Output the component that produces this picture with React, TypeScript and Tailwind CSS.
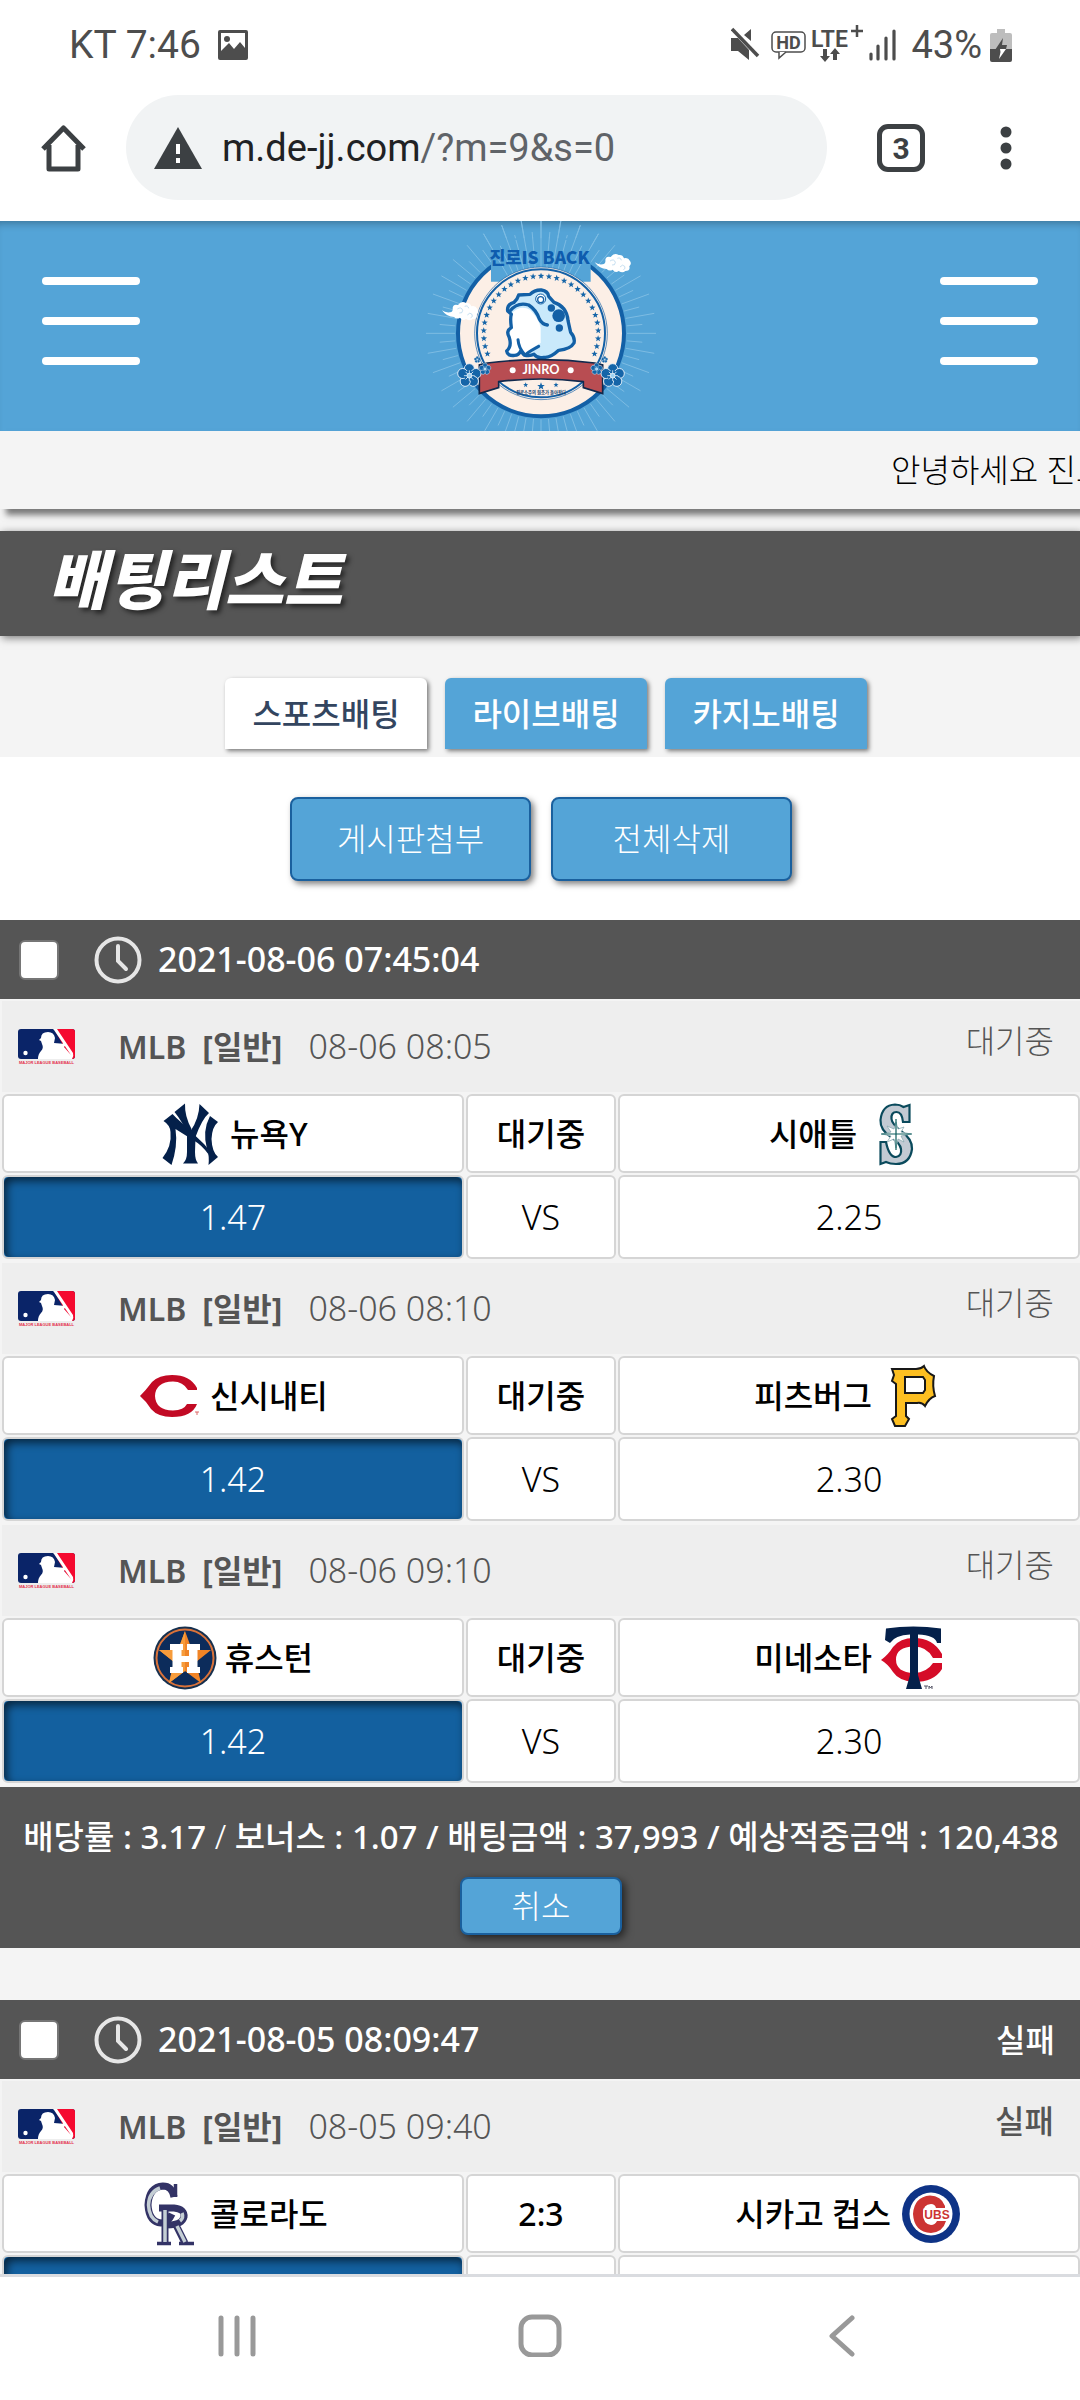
import type { ReactNode } from 'react';

interface Team {
  name: string;
  logo: ReactNode;
}

interface Match {
  id: number;
  time: string;
  status: string;
  statusBold?: boolean;
  score: string;
  home: Team;
  away: Team;
  homeOdds: string;
  awayOdds: string;
}

interface Slip {
  id: number;
  createdAt: string;
  result?: string;
  matches: Match[];
}

/* ---------- team logos, all on a 64x64 canvas ---------- */

function LogoBox({ children }: { children: ReactNode }) {
  return (
    <svg viewBox="0 0 64 64" className="size-16 shrink-0" aria-hidden="true">
      {children}
    </svg>
  );
}

const yankees = (
  <LogoBox>
    <g fill="#04204a">
      <path d="M5.5 19 L14.5 12 Q18 16 24 21 L46 42 Q51 47 51 53 Q44 43 35 38 L17.5 27 Q20 44 13.5 63 L4.5 56 Q14 44 12.5 30 Q12 23 5.5 19Z" />
      <path d="M16.5 10 L27 1.5 Q26.5 14 33.5 27 L31.5 35 Q24 19 16.5 10Z" />
      <path d="M41.5 2 L51 11 Q44 17 37.5 35 L37 50 Q37 58 40 61.5 L25 61.5 Q29 58 29 50 L29 32 L32.5 29 Q41 17 41.5 2Z" />
      <path d="M52 14 L60 20 Q54 25 53.5 37 Q54 50 60 55 L50.5 63 Q51.5 54 49 47 Q44 29 52 14Z" />
    </g>
  </LogoBox>
);

const mariners = (
  <LogoBox>
    <path
      d="M44.5 3 V20 H38 Q37 10 31.5 10 Q26 10 26.5 17 Q27 22 36 29 Q47.5 37 47 47 Q45 62 31 62 Q25 62 21 60 L15.5 62 V40 H21 Q24 55 31 55 Q37 54 36 47 Q35 41 26 35 Q15 28 15.5 18 Q17 3 30 2.5 Q35 2.5 38.5 5 Z"
      fill="#c2cad3"
      stroke="#0a4a5c"
      strokeWidth="2.2"
    />
    <path d="M31 20 L33 27 L39 25 L36 30 L46 32 L36 34 L39 40 L33 37 L31 46 L29 37 L22 40 L26 34 L17 32 L26 30 L22 24 L29 27Z" fill="#fff" stroke="#7fa3aa" strokeWidth="0.7" />
    <path d="M31 17 V48 M16 32 H47" stroke="#0b5c5c" strokeWidth="1.2" />
  </LogoBox>
);

const reds = (
  <LogoBox>
    <path d="M2 32 Q8 26 14 18 Q21 11 34 11 Q52 11 59 24 V26 H50 Q45 17.5 35 17.5 Q17.5 18 17 32 Q17.5 46 35 46.5 Q46 46 49 40 H59 Q54 53 34 53 Q20 53 13 45 Q8 37 2 32Z" fill="#c20a24" />
    <path d="M57 48 H61 M59 48 V51" stroke="#d66" strokeWidth="1" />
  </LogoBox>
);

const pirates = (
  <LogoBox>
    <path
      d="M12 5 H36 Q41 5 44 2 Q46 8 54 12 Q52 22 55 32 Q49 34 45 42 Q42 38 37 39 H26 V52 L29 55 L25 62 H15 L12 55 L16 52 V20 L12 17 L14 11 Z M25 13 V29 H43 L45 26 V16 L43 13 Z"
      fill="#fdbf21"
      fillRule="evenodd"
      stroke="#181818"
      strokeWidth="2"
    />
  </LogoBox>
);

const astros = (
  <LogoBox>
    <circle cx="32" cy="32" r="31.5" fill="#15304f" />
    <circle cx="32" cy="32" r="28.5" fill="#0c2c5b" stroke="#d9723a" strokeWidth="2" />
    <path d="M32 5 L39 24 H58 L43 36 L48 57 L32 45 L16 57 L21 36 L6 24 H25Z" fill="#f08426" />
    <path d="M32 5 L32 45 L16 57 L21 36 L6 24 H25Z" fill="#f79c3b" />
    <path d="M17 18 H30 V24 H28.5 V30 H36 V24 H34 V18 H47 V24 H44.5 V41 H47 V47 H34 V41 H36 V36 H28.5 V41 H30 V47 H17 V41 H19.5 V24 H17Z" fill="#fff" />
  </LogoBox>
);

const twins = (
  <LogoBox>
    <path d="M1 34 Q8 29 13 21 Q20 12 34 12 Q53 12 62 28 V32 H53 Q47 20.5 34 20.5 Q16 21 16 33.5 Q16 46.5 34 47 Q47 46.5 53 37 H62 V43 Q54 56 34 56 Q19 55 13 46 Q8 38 1 34Z" fill="#d50c28" />
    <path d="M6 2.5 Q33 -1.5 61 2.5 V17 H57 Q55 9 38 8.5 V49 L42 63 H26 L30 49 V8.5 Q15 9 10 17 L5 14Z" fill="#04204a" />
    <path d="M44 60 H48 M46 60 V63 M49 63 V60 L50.5 62 L52 60 V63" stroke="#556" strokeWidth="1" fill="none" />
  </LogoBox>
);

const rockies = (
  <LogoBox>
    <g fill="none" strokeLinejoin="round">
      <g stroke="#333366" strokeWidth="7">
        <path d="M36 15 Q34 4 25 4 Q11 5 10 23 Q11 40 23 41 Q30 41 34 32" />
        <path d="M27 26 V61 M21 26 H36 Q47 27 46 35 Q44 43 29 43 M38 43 L47 61" />
      </g>
      <path d="M19 61.5 H33 M41 61.5 H56 M37.5 2 V15" stroke="#333366" strokeWidth="3.5" />
      <g stroke="#c4ced4" strokeWidth="3.5">
        <path d="M22 6 Q11 10 10.5 23 Q11 36 20 40" />
        <path d="M27 28 V60 M39 44 L47 60 M44 31 Q46 36 42 39" />
      </g>
    </g>
  </LogoBox>
);

const cubs = (
  <LogoBox>
    <circle cx="32" cy="32" r="29" fill="#0e3386" />
    <circle cx="32" cy="32" r="21.5" fill="#fff" />
    <path d="M46 24 Q42 13.5 31 13.5 Q15 15 14 32 Q15 50 32 51 Q44 50 47 39 H38 Q36 43 32 43 Q24 42 24 32 Q24 22 32 22 Q36 22 37 26 H46Z" fill="#cc3433" />
    <text x="38" y="37" textAnchor="middle" fontSize="12" fontWeight="900" fill="#cc3433" stroke="#fff" strokeWidth="3" paintOrder="stroke" className="font-['Liberation_Sans',sans-serif]">
      UBS
    </text>
  </LogoBox>
);

function MlbLogo() {
  return (
    <svg viewBox="0 0 58 38" className="h-[38px] w-[58px] shrink-0" role="img" aria-label="MLB">
      <rect y="1" width="57" height="30" rx="3" fill="#0a2468" />
      <path d="M36 1 H54 Q57 1 57 4 V28 Q57 31 54 31 H53 Z" fill="#f5092f" />
      <path
        d="M35 1 H39 L55 25 Q56 28 54 31 H20 Q20 26 23 23 Q26 20 24 16 L23 13 L21 12 L23 10 Q23 4 30 4 Q36 4 37 10 L36 15 L48 16 L46 19 L53 27 L36 2Z"
        fill="#fff"
      />
      <circle cx="7.5" cy="25" r="2.2" fill="#fff" />
      <text x="28.5" y="36" textAnchor="middle" fontSize="4" fontWeight="700" fill="#e4314f" className="font-['Liberation_Sans',sans-serif]">
        MAJOR LEAGUE BASEBALL
      </text>
    </svg>
  );
}

/* ---------- data ---------- */

const SLIPS: Slip[] = [
  {
    id: 1,
    createdAt: '2021-08-06 07:45:04',
    matches: [
      {
        id: 11,
        time: '08-06 08:05',
        status: '대기중',
        score: '대기중',
        home: { name: '뉴욕Y', logo: yankees },
        away: { name: '시애틀', logo: mariners },
        homeOdds: '1.47',
        awayOdds: '2.25',
      },
      {
        id: 12,
        time: '08-06 08:10',
        status: '대기중',
        score: '대기중',
        home: { name: '신시내티', logo: reds },
        away: { name: '피츠버그', logo: pirates },
        homeOdds: '1.42',
        awayOdds: '2.30',
      },
      {
        id: 13,
        time: '08-06 09:10',
        status: '대기중',
        score: '대기중',
        home: { name: '휴스턴', logo: astros },
        away: { name: '미네소타', logo: twins },
        homeOdds: '1.42',
        awayOdds: '2.30',
      },
    ],
  },
  {
    id: 2,
    createdAt: '2021-08-05 08:09:47',
    result: '실패',
    matches: [
      {
        id: 21,
        time: '08-05 09:40',
        status: '실패',
        statusBold: true,
        score: '2:3',
        home: { name: '콜로라도', logo: rockies },
        away: { name: '시카고 컵스', logo: cubs },
        homeOdds: '',
        awayOdds: '',
      },
    ],
  },
];

const TABS = ['스포츠배팅', '라이브배팅', '카지노배팅'];

/* ---------- phone chrome ---------- */

function StatusBar() {
  return (
    <div className="flex h-[90px] shrink-0 items-center justify-between pr-[68px] pl-[69px] font-['Roboto',sans-serif] text-[38px] text-[#4d4d4d]">
      <div className="flex items-center gap-4">
        <span className="text-[39px]">KT 7:46</span>
        <svg viewBox="0 0 32 32" className="size-8" aria-hidden="true">
          <path
            d="M3 1 H29 Q31 1 31 3 V29 Q31 31 29 31 H3 Q1 31 1 29 V3 Q1 1 3 1Z M4 4 V22 L12 14 L17 20 L23 13 L28 19 V4Z"
            fill="#4d4d4d"
            fillRule="evenodd"
          />
          <circle cx="10" cy="10" r="3" fill="#4d4d4d" />
        </svg>
      </div>
      <div className="flex items-center">
        <svg viewBox="0 0 180 44" className="h-11 w-[180px]" fill="#4d4d4d" aria-hidden="true">
          <path d="M0 15 H7 L18 27 V37 L7 28 H0Z M20 6 V18 L13 12Z" />
          <path d="M1 6 L27 33" stroke="#4d4d4d" strokeWidth="3.5" />
          <rect x="41" y="9" width="33" height="20" rx="4" fill="none" stroke="#4d4d4d" strokeWidth="1.5" />
          <path d="M48 29 V35 L55 29" fill="#fff" stroke="#4d4d4d" strokeWidth="1.5" />
          <text x="57.5" y="25.5" textAnchor="middle" fontSize="18" fontWeight="700">HD</text>
          <text x="80" y="24" fontSize="23" fontWeight="600">LTE</text>
          <path d="M126 2 V14 M120 8 H132" stroke="#4d4d4d" strokeWidth="2.5" />
          <path d="M92 26 H96 V33 H99 L94 39 L89 33 H92Z M102 37 H106 V31 H109 L104 25 L99 31 H102Z" />
          <path d="M140 31 V36 M147 23 V36 M155 15 V36 M163 8 V36" stroke="#4d4d4d" strokeWidth="3.2" strokeLinecap="round" />
        </svg>
        <span>43%</span>
        <svg viewBox="0 0 22 34" className="ml-2 h-[34px] w-[22px]" aria-hidden="true">
          <path d="M7 1 H15 V5 H20 Q22 5 22 7 V21 H0 V7 Q0 5 2 5 H7Z" fill="#bdbdbd" />
          <path d="M0 21 H22 V32 Q22 34 20 34 H2 Q0 34 0 32Z" fill="#4d4d4d" />
          <path d="M13 10 L5 22 H12 L13 21 H16 L17 17 H12Z" fill="#4d4d4d" />
          <path d="M10 21 H16 L9 31 L10.5 24Z" fill="#fff" />
        </svg>
      </div>
    </div>
  );
}

function BrowserBar() {
  return (
    <div className="flex h-[131px] shrink-0 items-start pr-[60px] pl-10 font-['Roboto',sans-serif]">
      <button type="button" aria-label="Home" className="mt-[34px]">
        <svg viewBox="0 0 48 48" className="size-12" fill="none" stroke="#3c4043" strokeWidth="5" strokeLinejoin="round" aria-hidden="true">
          <path d="M9 21 V45 H38 V21 M3 25 L23.5 4 L44 25" />
        </svg>
      </button>
      <label className="mt-[5px] ml-[38px] flex h-[105px] min-w-0 flex-1 items-center rounded-full bg-[#f1f3f4] pl-7">
        <svg viewBox="0 0 48 42" className="h-[42px] w-12 shrink-0" aria-hidden="true">
          <path d="M24 0 L48 42 H0Z" fill="#3c4043" />
          <path d="M24 17 V27 M24 31 V36" stroke="#fff" strokeWidth="4" />
        </svg>
        <span className="relative ml-5 flex min-w-0 flex-1 pt-[2px] text-[38px]">
          <span className="text-[#202124]">m.de-jj.com</span>
          <span className="text-[#5f6368]">/?m=9&amp;s=0</span>
          <input aria-label="Address" className="absolute inset-0 bg-transparent outline-none" />
        </span>
      </label>
      <button
        type="button"
        aria-label="Tabs"
        className="mt-[34px] ml-[50px] flex size-12 items-center justify-center rounded-[11px] border-[5px] border-[#3c4043] text-[30px] font-bold text-[#3c4043]"
      >
        3
      </button>
      <button type="button" aria-label="Menu" className="mt-[34px] ml-[67px] flex h-12 w-7 items-center justify-center">
        <svg viewBox="0 0 12 48" className="h-12 w-3" fill="#3c4043" aria-hidden="true">
          <circle cx="6" cy="8" r="5.5" />
          <circle cx="6" cy="24" r="5.5" />
          <circle cx="6" cy="40" r="5.5" />
        </svg>
      </button>
    </div>
  );
}

function NavBar() {
  return (
    <nav className="flex h-[126px] shrink-0 items-center justify-between border-t-[3px] border-[#dadce0] bg-white px-[216px] pb-2">
      <button type="button" aria-label="Recent apps">
        <svg viewBox="0 0 44 44" className="size-11" stroke="#999" strokeWidth="5" strokeLinecap="round" aria-hidden="true">
          <path d="M5 5 V41 M21 5 V41 M37 5 V41" />
        </svg>
      </button>
      <button type="button" aria-label="Home screen">
        <svg viewBox="0 0 44 44" className="size-11" fill="none" stroke="#999" strokeWidth="5" aria-hidden="true">
          <rect x="3" y="4" width="38" height="38" rx="11" />
        </svg>
      </button>
      <button type="button" aria-label="Back">
        <svg viewBox="0 0 44 44" className="size-11" fill="none" stroke="#999" strokeWidth="5" strokeLinecap="round" strokeLinejoin="round" aria-hidden="true">
          <path d="M32 5 L12 23 L32 41" />
        </svg>
      </button>
    </nav>
  );
}

/* ---------- site header ---------- */

function Hamburger({ label }: { label: string }) {
  return (
    <button type="button" aria-label={label} className="flex w-[98px] flex-col gap-8 pb-[10px]">
      <span className="h-2 rounded-full bg-white" />
      <span className="h-2 rounded-full bg-white" />
      <span className="h-2 rounded-full bg-white" />
    </button>
  );
}

const CX = 423;
const CY = 355;

function polar(radius: number, deg: number) {
  const a = (deg * Math.PI) / 180;
  return [CX + radius * Math.cos(a), CY + radius * Math.sin(a)];
}

function Star({ x, y, r }: { x: number; y: number; r: number }) {
  const pts = Array.from({ length: 10 }, (_, i) => {
    const a = ((i * 36 - 90) * Math.PI) / 180;
    const rr = i % 2 ? r * 0.42 : r;
    return `${x + rr * Math.cos(a)},${y + rr * Math.sin(a)}`;
  });
  return <polygon points={pts.join(' ')} fill="#1565a8" />;
}

function Flower({ x, y, r }: { x: number; y: number; r: number }) {
  return (
    <g transform={`translate(${x} ${y})`}>
      {[0, 72, 144, 216, 288].map((deg) => (
        <circle key={deg} cy={-r * 0.58} r={r * 0.42} fill="#1565a8" stroke="#e8f2fa" strokeWidth={r * 0.07} transform={`rotate(${deg})`} />
      ))}
      <circle r={r * 0.42} fill="#1565a8" />
      {[0, 45, 90, 135].map((deg) => (
        <path key={deg} d={`M0 ${-r * 0.45} V${r * 0.45}`} stroke="#fff" strokeWidth={r * 0.06} transform={`rotate(${deg})`} />
      ))}
      <circle r={r * 0.2} fill="#9fd2f2" stroke="#fff" strokeWidth={r * 0.06} />
    </g>
  );
}

function Cloud({ x, y }: { x: number; y: number }) {
  return (
    <g transform={`translate(${x} ${y})`}>
      <path d="M0 24 Q10 32 24 30 Q34 28 32 16 Q34 4 48 8 Q58 -6 72 2 Q84 0 88 12 Q100 8 106 20 Q112 28 104 36 Q108 50 92 50 Q84 58 72 50 Q62 58 54 46 Q44 52 36 44 Q14 44 0 24Z" fill="#fff" />
      <path d="M46 20 Q58 12 62 24 Q62 34 52 32 M76 38 Q84 28 90 36 Q94 44 86 46 M68 12 Q78 8 80 18" fill="none" stroke="#a9cfe8" strokeWidth="2" />
    </g>
  );
}

const TOAD =
  'M323 288 Q320 268 342 262 Q352 254 356 240 L390 238 Q404 224 424 225 Q444 228 446 244 L462 262 Q500 274 504 316 Q510 344 512 352 Q526 368 522 384 Q512 402 476 406 Q450 430 432 427 Q412 432 402 418 Q390 424 372 420 L362 408 Q356 421 344 421 Q322 424 320 408 Q336 394 328 368 Q316 348 334 338 Q330 308 334 298 Z';

function JinroLogo() {
  const rays = Array.from({ length: 72 }, (_, i) => i * 5);
  const stars = Array.from({ length: 29 }, (_, i) => -201 + i * 7.93);
  return (
    <svg viewBox="0 18 840 630" className="h-[210px] w-[280px]" role="img" aria-label="진로 IS BACK">
      {rays.map((deg) => {
        const [x1, y1] = polar(258, deg);
        const [x2, y2] = polar(deg % 10 ? 305 : 345, deg);
        return <line key={deg} x1={x1} y1={y1} x2={x2} y2={y2} stroke="#7dbce3" strokeWidth="3" />;
      })}
      <circle cx={CX} cy={CY} r="249" fill="#fcefe6" stroke="#1360a6" strokeWidth="12" />
      <path d="M273 70 H572 V200 H273Z" fill="#54a4d7" />
      {rays.filter((deg) => deg > 235 && deg < 305).map((deg) => {
        const [x1, y1] = polar(190, deg);
        const [x2, y2] = polar(deg % 10 ? 290 : 345, deg);
        return <line key={deg} x1={x1} y1={y1} x2={x2} y2={y2} stroke="#7dbce3" strokeWidth="3" />;
      })}
      <circle cx={CX} cy={CY} r="199" fill="#fcefe6" stroke="#1360a6" strokeWidth="2" />
      <circle cx={CX} cy={CY} r="192" fill="none" stroke="#1360a6" strokeWidth="6" />
      {stars.map((deg) => {
        const [x, y] = polar(172, deg);
        return <Star key={deg} x={x} y={y} r={10} />;
      })}
      <text x="419" y="146" textAnchor="middle" fontSize="52" fontWeight="900" fill="#0e5cae" className="font-['Noto_Sans_CJK_KR',sans-serif]">
        진로IS BACK
      </text>

      {/* toad */}
      <path d={TOAD} fill="#c9e9fb" />
      <path d="M334 296 Q360 268 390 284 Q418 312 422 338 V384 Q398 396 392 416 H374 L362 410 L340 418 L324 410 Q340 394 332 364 Q326 348 338 340Z" fill="#fff" />
      <path d={TOAD} fill="none" stroke="#1360a6" strokeWidth="10" strokeLinejoin="round" />
      <path d="M330 288 Q352 260 386 270 Q408 284 418 312 Q426 328 442 330" fill="none" stroke="#1360a6" strokeWidth="10" strokeLinecap="round" />
      <path d="M354 374 Q356 398 372 416 M380 416 Q390 408 416 394" fill="none" stroke="#1360a6" strokeWidth="9" strokeLinecap="round" />
      <circle cx="422" cy="252" r="15" fill="#fff" stroke="#1360a6" strokeWidth="3" />
      <circle cx="422" cy="254" r="9" fill="none" stroke="#1360a6" strokeWidth="4" />
      <circle cx="476" cy="302" r="19" fill="#1360a6" />
      <circle cx="454" cy="279" r="11" fill="#1360a6" />
      <circle cx="478" cy="339" r="11" fill="#1360a6" />

      <Star x={377} y={510} r={8} />
      <Star x={423} y={514} r={12} />
      <Star x={468} y={510} r={8} />
      <text x="423" y="537" textAnchor="middle" fontSize="13" fontWeight="700" fill="#17406e" className="font-['Noto_Sans_CJK_KR',sans-serif]">
        진로소주의 원조가 돌아왔다
      </text>

      {/* ribbon */}
      <path d="M238 536 V450 L262 444 Q423 424 584 444 L608 450 V536 L550 518 V500 Q423 484 296 500 V518Z" fill="#b84d52" stroke="#10294d" strokeWidth="5" />
      <circle cx="338" cy="466" r="9" fill="#fff" />
      <circle cx="512" cy="466" r="9" fill="#fff" />
      <text x="423" y="478" textAnchor="middle" fontSize="38" fontWeight="700" fill="#fff" className="font-['Lato',sans-serif]">
        JINRO
      </text>

      <Flower x={208} y={482} r={36} />
      <Flower x={255} y={462} r={18} />
      <Flower x={232} y={434} r={10} />
      <Flower x={638} y={482} r={36} />
      <Flower x={590} y={462} r={18} />
      <Flower x={614} y={434} r={10} />
      <Cloud x={126} y={262} />
      <Cloud x={584} y={118} />
    </svg>
  );
}

/* ---------- betting list ---------- */

function MatchBlock({ match }: { match: Match }) {
  const cell = 'rounded-md border-2 border-[#d5d5d5] bg-white p-0 text-center';
  return (
    <article className="pb-[2px]">
      <header className="ml-[2px] flex h-[91px] items-center bg-[#eee] pr-[26px] pl-4 text-[#555]">
        <MlbLogo />
        <b className="ml-[42px] text-[32px] font-semibold">MLB</b>
        <b className="ml-4 text-[32px]">[일반]</b>
        <time className="ml-[26px] text-[34px] font-light">{match.time}</time>
        <span className={match.statusBold ? 'ml-auto pb-3 text-[32px] font-medium' : 'ml-auto pb-3 text-[32px] font-light'}>
          {match.status}
        </span>
      </header>
      <table className="w-[calc(100%+2px)] table-fixed border-separate border-spacing-[2px]">
        <tbody>
          <tr className="h-[79px] text-[32px] font-medium">
            <td className={`${cell} w-[43%]`}>
              <div className="flex items-center justify-center gap-2">
                {match.home.logo}
                {match.home.name}
              </div>
            </td>
            <td className={`${cell} w-[14%]`}>{match.score}</td>
            <td className={`${cell} w-[43%]`}>
              <div className="flex items-center justify-center gap-2">
                {match.away.name}
                {match.away.logo}
              </div>
            </td>
          </tr>
          <tr className="h-[84px] text-[34px] font-light">
            <td className="rounded-md border-2 border-[#d5d5d5] bg-[#13609f] p-0 text-center text-white shadow-[inset_3px_4px_8px_rgba(0,0,0,0.6)]">
              {match.homeOdds}
            </td>
            <td className={cell}>{match.homeOdds && 'VS'}</td>
            <td className={cell}>{match.awayOdds}</td>
          </tr>
        </tbody>
      </table>
    </article>
  );
}

function SlipHeader({ slip }: { slip: Slip }) {
  return (
    <div className="mb-[2px] flex h-[79px] items-center bg-[#555] pr-[25px] pl-[19px] text-white">
      <input
        type="checkbox"
        aria-label={`${slip.createdAt} 선택`}
        className="size-10 shrink-0 appearance-none rounded-md border-2 border-[#767676] bg-white"
      />
      <svg viewBox="0 0 48 48" className="ml-[35px] size-12" fill="none" stroke="#e6e6e6" strokeWidth="4" strokeLinecap="round" aria-hidden="true">
        <circle cx="24" cy="24" r="21.5" />
        <path d="M24 10 V25 L32 33" />
      </svg>
      <time className="ml-4 text-[34px] font-medium">{slip.createdAt}</time>
      {slip.result && <span className="ml-auto text-[32px] font-medium">{slip.result}</span>}
    </div>
  );
}

export default function App() {
  const [open, closed] = SLIPS;

  return (
    <div className="flex h-screen flex-col overflow-hidden bg-white font-['Noto_Sans','Noto_Sans_CJK_KR',sans-serif] text-black">
      <StatusBar />
      <BrowserBar />

      <main className="min-h-0 flex-1 overflow-hidden bg-[#f4f4f4]">
        <header className="flex h-[210px] items-center justify-between bg-[#54a4d7] px-[42px] shadow-[inset_0_8px_8px_-6px_rgba(0,0,0,0.3)]">
          <Hamburger label="메뉴" />
          <JinroLogo />
          <Hamburger label="내 정보" />
        </header>

        <p className="flex h-[78px] items-center pl-[82.5%] text-[32px] font-light whitespace-nowrap shadow-[6px_6px_6px_rgba(0,0,0,0.5)]">
          안녕하세요 진로
        </p>

        <div className="mt-[22px] flex h-[105px] items-center bg-[#555] pl-12 shadow-[2px_2px_8px_rgba(0,0,0,0.5)]">
          <h1 className="pb-4 font-['Noto_Sans_CJK_KR',sans-serif] text-[64px] leading-none font-black text-white italic [text-shadow:3px_3px_5px_rgba(0,0,0,0.6)]">
            배팅리스트
          </h1>
        </div>

        <div className="flex justify-center gap-[18px] pt-[42px] pb-2 pl-3">
          {TABS.map((tab, i) => (
            <button
              key={tab}
              type="button"
              className={
                i === 0
                  ? 'h-[71px] w-[202px] rounded-t-md bg-white text-[32px] font-medium text-[#33455f] shadow-[2px_2px_4px_rgba(0,0,0,0.5)]'
                  : 'h-[71px] w-[202px] rounded-t-md bg-[#54a4d7] text-[32px] font-medium text-white shadow-[2px_2px_4px_rgba(0,0,0,0.5)]'
              }
            >
              {tab}
            </button>
          ))}
        </div>

        <div className="flex justify-center gap-5 bg-white pt-10 pb-[39px] pl-[2px]">
          {['게시판첨부', '전체삭제'].map((label) => (
            <button
              key={label}
              type="button"
              className="h-[84px] w-[241px] rounded-lg border-2 border-[#1a609e] bg-[#54a4d7] text-[32px] font-light text-white shadow-[3px_3px_6px_rgba(0,0,0,0.5)]"
            >
              {label}
            </button>
          ))}
        </div>

        <section>
          <SlipHeader slip={open} />
          {open.matches.map((match) => (
            <MatchBlock key={match.id} match={match} />
          ))}
          <footer className="flex h-[161px] flex-col items-center bg-[#555] pt-[26px] pl-[2px] text-white">
            <p className="text-[33px] leading-[48px] font-medium whitespace-nowrap">
              배당률 : 3.17 <span className="font-light">/</span> 보너스 : 1.07 / 배팅금액 : 37,993 / 예상적중금액 : 120,438
            </p>
            <button
              type="button"
              className="mt-4 h-[58px] w-[162px] rounded-lg border-2 border-[#1a609e] bg-[#54a4d7] text-[32px] leading-none font-light shadow-[3px_3px_8px_rgba(0,0,0,0.6)]"
            >
              취소
            </button>
          </footer>
        </section>

        <section className="mt-[52px]">
          <SlipHeader slip={closed} />
          {closed.matches.map((match) => (
            <MatchBlock key={match.id} match={match} />
          ))}
        </section>
      </main>

      <NavBar />
    </div>
  );
}
